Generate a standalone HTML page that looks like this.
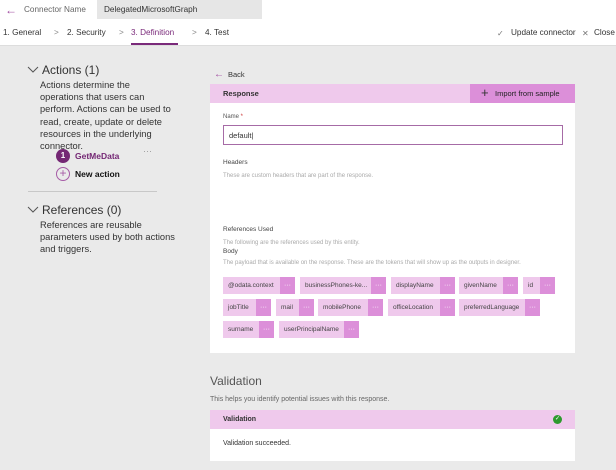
<!DOCTYPE html>
<html><head><style>
*{margin:0;padding:0;box-sizing:border-box}
body{width:616px;height:470px;overflow:hidden;background:#eaeaea;font-family:"Liberation Sans",sans-serif;color:#333;position:relative}
.a{position:absolute;white-space:nowrap}
.chip{position:absolute;height:17px;background:#efc9ec;font-size:6.5px;color:#444;line-height:17px;padding-left:5px;overflow:hidden}
.chip i{position:absolute;right:0;top:0;width:15px;height:17px;background:#dc8fd9;font-style:normal;text-align:center;color:#fff;font-size:7px}
.s{font-size:9.3px;color:#333;line-height:12.2px}
.g{font-size:6px;color:#aaa}
.t{font-size:8.2px;color:#333;top:28px}
</style></head><body>
<div class="a" style="left:0;top:0;width:616px;height:46px;background:#fff;border-bottom:1px solid #ddd"></div>
<div class="a" style="left:5px;top:3px;font-size:12px;color:#a04aa0">←</div>
<div class="a" style="left:24px;top:5px;font-size:8.2px;color:#666">Connector Name</div>
<div class="a" style="left:97px;top:0;width:165px;height:19px;background:#e6e6e6"></div>
<div class="a" style="left:104px;top:5px;font-size:8.2px;color:#333">DelegatedMicrosoftGraph</div>
<div class="a t" style="left:3px">1. General</div>
<div class="a t" style="left:54px;color:#888">&gt;</div>
<div class="a t" style="left:67px">2. Security</div>
<div class="a t" style="left:119px;color:#888">&gt;</div>
<div class="a t" style="left:131px;color:#7a2a7a">3. Definition</div>
<div class="a" style="left:131px;top:43px;width:47px;height:2px;background:#7a2a7a"></div>
<div class="a t" style="left:192px;color:#888">&gt;</div>
<div class="a t" style="left:205px">4. Test</div>
<div class="a t" style="left:497px;color:#777">✓</div>
<div class="a t" style="left:511px">Update connector</div>
<div class="a t" style="left:582px;color:#777">✕</div>
<div class="a t" style="left:594px">Close</div>

<svg class="a" style="left:27px;top:66px" width="12" height="8"><path d="M1 1l5 5 5-5" fill="none" stroke="#555"/></svg>
<div class="a" style="left:42px;top:63px;font-size:12px;color:#333">Actions (1)</div>
<div class="a s" style="left:40px;top:79px">Actions determine the<br>operations that users can<br>perform. Actions can be used to<br>read, create, update or delete<br>resources in the underlying<br>connector.</div>
<div class="a" style="left:56px;top:149px;width:14px;height:14px;border-radius:50%;background:#742774;color:#fff;font-size:8px;text-align:center;line-height:14px;font-weight:bold">1</div>
<div class="a" style="left:75px;top:151px;font-size:8.5px;font-weight:bold;color:#742774">GetMeData</div>
<div class="a" style="left:143px;top:146px;font-size:9px;color:#999">···</div>
<div class="a" style="left:56px;top:167px;width:14px;height:14px;border-radius:50%;border:1px solid #a65ba6;color:#a65ba6;font-size:12px;text-align:center;line-height:11px">+</div>
<div class="a" style="left:75px;top:169px;font-size:8.5px;font-weight:bold;color:#111">New action</div>
<div class="a" style="left:28px;top:191px;width:129px;height:1px;background:#c8c8c8"></div>
<svg class="a" style="left:27px;top:206px" width="12" height="8"><path d="M1 1l5 5 5-5" fill="none" stroke="#555"/></svg>
<div class="a" style="left:42px;top:203px;font-size:12px;color:#333">References (0)</div>
<div class="a s" style="left:40px;top:219px">References are reusable<br>parameters used by both actions<br>and triggers.</div>

<div class="a" style="left:214px;top:69px;font-size:10px;color:#a04aa0">←</div>
<div class="a" style="left:228px;top:70px;font-size:7.5px;color:#333">Back</div>
<div class="a" style="left:210px;top:84px;width:365px;height:269px;background:#fff"></div>
<div class="a" style="left:210px;top:84px;width:365px;height:19px;background:#efc9ec"></div>
<div class="a" style="left:223px;top:89px;font-size:7.5px;font-weight:bold;color:#333">Response</div>
<div class="a" style="left:470px;top:84px;width:105px;height:19px;background:#dc8fd9"></div>
<div class="a" style="left:481px;top:85px;font-size:13px;color:#333">+</div>
<div class="a" style="left:495px;top:89px;font-size:7.5px;color:#222">Import from sample</div>
<div class="a" style="left:223px;top:114px;font-size:6px;color:#555">Name <span style="color:#c33">*</span></div>
<div class="a" style="left:223px;top:125px;width:340px;height:20px;border:1px solid #a66ba6"></div>
<div class="a" style="left:229px;top:131px;font-size:7.5px;color:#333">default|</div>
<div class="a" style="left:223px;top:159px;font-size:6.5px;color:#444">Headers</div>
<div class="a g" style="left:223px;top:173px">These are custom headers that are part of the response.</div>
<div class="a" style="left:223px;top:226px;font-size:6.5px;color:#444">References Used</div>
<div class="a g" style="left:223px;top:240px">The following are the references used by this entity.</div>
<div class="a" style="left:223px;top:248px;font-size:6.5px;color:#444">Body</div>
<div class="a g" style="left:223px;top:260px">The payload that is available on the response. These are the tokens that will show up as the outputs in designer.</div>

<div class="chip" style="left:223px;top:277px;width:72px">@odata.context<i>···</i></div>
<div class="chip" style="left:300px;top:277px;width:86px">businessPhones-ke...<i>···</i></div>
<div class="chip" style="left:391px;top:277px;width:64px">displayName<i>···</i></div>
<div class="chip" style="left:459px;top:277px;width:59px">givenName<i>···</i></div>
<div class="chip" style="left:523px;top:277px;width:32px">id<i>···</i></div>
<div class="chip" style="left:223px;top:299px;width:48px">jobTitle<i>···</i></div>
<div class="chip" style="left:276px;top:299px;width:38px">mail<i>···</i></div>
<div class="chip" style="left:318px;top:299px;width:65px">mobilePhone<i>···</i></div>
<div class="chip" style="left:388px;top:299px;width:67px">officeLocation<i>···</i></div>
<div class="chip" style="left:459px;top:299px;width:81px">preferredLanguage<i>···</i></div>
<div class="chip" style="left:223px;top:321px;width:51px">surname<i>···</i></div>
<div class="chip" style="left:279px;top:321px;width:80px">userPrincipalName<i>···</i></div>

<div class="a" style="left:210px;top:374px;font-size:12px;color:#555">Validation</div>
<div class="a" style="left:210px;top:396px;font-size:7px;color:#666">This helps you identify potential issues with this response.</div>
<div class="a" style="left:210px;top:410px;width:365px;height:19px;background:#efc9ec"></div>
<div class="a" style="left:223px;top:416px;font-size:7px;font-weight:bold;color:#333">Validation</div>
<div class="a" style="left:553px;top:415px;width:9px;height:9px;border-radius:50%;background:#2e9a2e;color:#fff;font-size:6px;text-align:center;line-height:9px">✓</div>
<div class="a" style="left:210px;top:429px;width:365px;height:32px;background:#fff"></div>
<div class="a" style="left:223px;top:440px;font-size:7px;color:#333">Validation succeeded.</div>
</body></html>
